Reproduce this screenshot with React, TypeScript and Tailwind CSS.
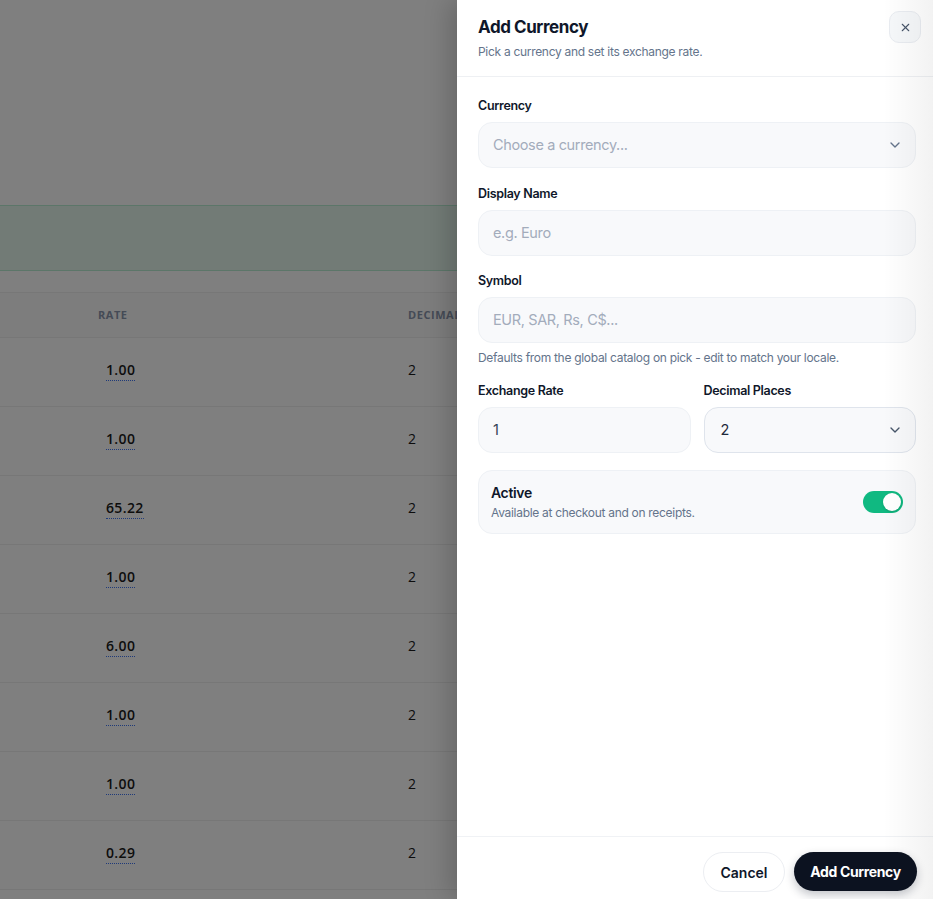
import { ChevronDown, X } from "lucide-react";

const rows = ["1.00", "1.00", "65.22", "1.00", "6.00", "1.00", "1.00", "0.29"];

function Field({ label, placeholder, select }: { label: string; placeholder: string; select?: boolean }) {
  return (
    <div className="flex flex-col">
      <label className="pt-[1px] text-[12.5px] font-semibold leading-[15px] tracking-tight text-[#0f172a]">{label}</label>
      <div className="mt-[9px] flex h-[46px] items-center justify-between rounded-[14px] border border-[#eef1f5] bg-[#f8f9fb] pl-[14px] pr-[12px]">
        <span className="text-[14.5px] tracking-tight text-[#a3acbb]">{placeholder}</span>
        {select && <ChevronDown className="h-[16px] w-[16px] text-[#64748b]" strokeWidth={2} />}
      </div>
    </div>
  );
}

export default function App() {
  return (
    <div className="relative h-[899px] w-full overflow-hidden bg-white font-['Inter',sans-serif]">
      {/* page behind the drawer */}
      <div className="flex flex-col">
        <div className="h-[205px]" />
        <div className="h-[66px] border-y border-[#b9ecd2] bg-[#e4f6ec]" />
        <div className="h-[21px]" />
        <div className="border-t border-[#eeeeee] font-['Open_Sans',sans-serif]">
          <div className="flex h-[45px] items-center border-b border-[#eeeeee] bg-[#fafafa] text-[11px] font-bold uppercase tracking-wider text-[#8a96ac]">
            <span className="ml-[98px] w-[310px]">Rate</span>
            <span>Decimals</span>
          </div>
          {rows.map((r, i) => (
            <div key={i} className="flex h-[69px] items-center border-b border-[#eeeeee] pb-[5px] text-[14px] font-semibold text-[#1a1a1a]">
              <span className="ml-[106px] w-[302px]">
                <span className="border-b-[1.5px] border-dotted border-[#3f74f2] pb-[1px] tracking-wide">{r}</span>
              </span>
              <span className="font-medium">2</span>
            </div>
          ))}
        </div>
      </div>

      {/* overlay */}
      <div className="absolute inset-0 bg-black/50" />

      {/* drawer */}
      <div className="absolute inset-y-0 right-0 flex w-[476px] flex-col bg-white shadow-[-8px_0_24px_rgba(0,0,0,0.18)]">
        <div className="flex items-start justify-between border-b border-[#eef0f3] pb-[16px] pl-[21px] pr-[12px] pt-[16px]">
          <div>
            <h2 className="text-[17px] font-bold leading-[22px] tracking-tight text-[#0f172a]">Add Currency</h2>
            <p className="mt-[6px] text-[12px] leading-4 tracking-tight text-[#64748b]">Pick a currency and set its exchange rate.</p>
          </div>
          <button className="-mt-[5px] flex h-[32px] w-[32px] items-center justify-center rounded-[10px] border border-[#e9ecf1] bg-[#f6f8fa]">
            <X className="h-[13px] w-[13px] text-[#475569]" strokeWidth={2} />
          </button>
        </div>

        <div className="flex flex-1 flex-col gap-[17px] pl-[21px] pr-[17px] pt-[20px]">
          <Field label="Currency" placeholder="Choose a currency..." select />
          <Field label="Display Name" placeholder="e.g. Euro" />
          <div className="-mt-[1px] flex flex-col">
            <Field label="Symbol" placeholder="EUR, SAR, Rs, C$..." />
            <p className="mt-[8px] text-[12px] leading-[14px] tracking-tight text-[#64748b]">
              Defaults from the global catalog on pick - edit to match your locale.
            </p>
          </div>
          <div className="grid grid-cols-2 gap-[13px]">
            <div className="flex flex-col">
              <label className="pt-[1px] text-[12.5px] font-semibold leading-[15px] tracking-tight text-[#0f172a]">Exchange Rate</label>
              <div className="mt-[9px] flex h-[46px] items-center rounded-[14px] border border-[#eef1f5] bg-[#f8f9fb] pl-[14px]">
                <span className="text-[14.5px] text-[#334155]">1</span>
              </div>
            </div>
            <div className="flex flex-col">
              <label className="pt-[1px] text-[12.5px] font-semibold leading-[15px] tracking-tight text-[#0f172a]">Decimal Places</label>
              <div className="mt-[9px] flex h-[46px] items-center justify-between rounded-[14px] border border-[#dfe4ec] bg-[#f8f9fb] pl-[16px] pr-[12px]">
                <span className="text-[14.5px] text-[#1e293b]">2</span>
                <ChevronDown className="h-[16px] w-[16px] text-[#475569]" strokeWidth={2} />
              </div>
            </div>
          </div>
          <div className="flex h-[64px] items-center justify-between rounded-[14px] border border-[#eef1f5] bg-[#f8f9fb] pl-[12px] pr-[12px]">
            <div>
              <div className="text-[14px] font-semibold leading-[18px] tracking-tight text-[#0f172a]">Active</div>
              <div className="mt-[3px] text-[12px] leading-4 tracking-tight text-[#64748b]">Available at checkout and on receipts.</div>
            </div>
            <div className="flex h-[22px] w-[40px] items-center justify-end rounded-full bg-[#10b981] pr-[2px]">
              <div className="h-[18px] w-[18px] rounded-full bg-white shadow-sm" />
            </div>
          </div>
        </div>

        <div className="flex h-[63px] items-start justify-end gap-[9px] border-t border-[#f0f2f5] pr-[16px] pt-[15px]">
          <button className="h-[40px] w-[82px] rounded-full border border-[#eceef2] bg-white text-[14px] font-semibold text-[#0f172a]">Cancel</button>
          <button className="h-[39px] w-[123px] rounded-full bg-[#0c1220] text-[14px] font-bold tracking-tight text-white shadow-[0_4px_10px_rgba(15,23,42,0.25)]">
            Add Currency
          </button>
        </div>

        {/* faint fade at the right edge */}
        <div className="pointer-events-none absolute inset-y-0 right-0 w-[50px] bg-gradient-to-r from-white/0 to-black/[0.05]" />
      </div>
    </div>
  );
}
